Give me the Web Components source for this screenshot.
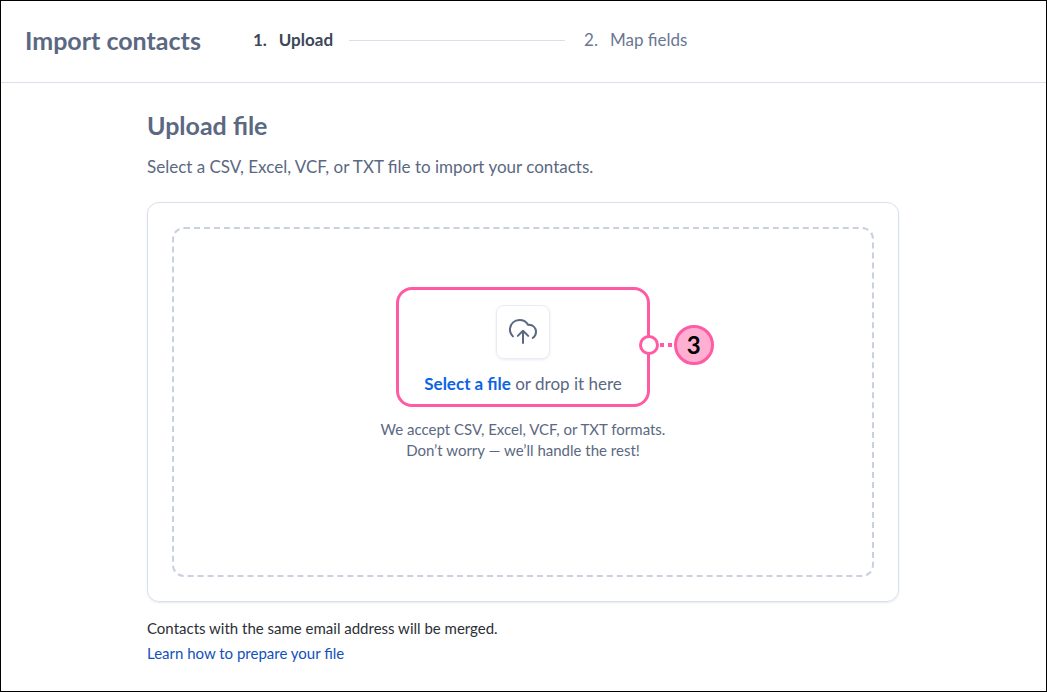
<!DOCTYPE html>
<html lang="en">
<head>
<meta charset="utf-8">
<meta name="viewport" content="width=device-width, initial-scale=1">
<title>Import contacts</title>
<style>
  html, body { margin: 0; }
  body {
    font-family: Lato, "Open Sans", sans-serif;
    background: #fff;
    color: #5b6882;
  }
</style>
</head>
<body>
<import-page>
  <import-header slot="header" heading="Import contacts">
    <import-step number="1." current>Upload</import-step>
    <import-step number="2.">Map fields</import-step>
  </import-header>
  <upload-panel heading="Upload file">
    <span slot="intro">Select a CSV, Excel, VCF, or TXT file to import your contacts.</span>
    <file-drop>
      <callout-box number="3">
        <file-picker></file-picker>
      </callout-box>
      <span slot="hint">We accept CSV, Excel, VCF, or TXT formats.<br>Don’t worry — we’ll handle the rest!</span>
    </file-drop>
    <span slot="note">Contacts with the same email address will be merged.</span>
    <help-link slot="note" to="#prepare">Learn how to prepare your file</help-link>
  </upload-panel>
</import-page>

<script>
const define = (name, html, setup) => {
  const template = document.createElement('template');
  template.innerHTML = html;
  customElements.define(name, class extends HTMLElement {
    constructor() {
      super();
      this.attachShadow({ mode: 'open' }).append(template.content.cloneNode(true));
    }
    connectedCallback() {
      if (setup) setup(this, this.shadowRoot);
    }
  });
};

define('import-page', `
  <style>
    :host { display: block; box-sizing: border-box; min-height: 100vh; border: 1px solid #000; }
    main { padding: 24px 25px 24px 24px; }
  </style>
  <slot name="header"></slot>
  <main><slot></slot></main>
`);

define('import-header', `
  <style>
    :host { display: block; border-bottom: 1px solid #dadfea; }
    header { display: flex; align-items: center; gap: 52px; padding: 23px 24px 26px; }
    h1 { margin: 0; font-size: 25px; line-height: 32px; font-weight: 700; white-space: nowrap; }
    nav { display: flex; align-items: center; }
  </style>
  <header>
    <h1></h1>
    <nav aria-label="Import steps"><slot></slot></nav>
  </header>
`, (host, root) => {
  root.querySelector('h1').textContent = host.getAttribute('heading');
});

define('import-step', `
  <style>
    :host { display: flex; align-items: center; font-size: 17px; line-height: 24px; color: #6b7793; white-space: nowrap; }
    :host([current]) { color: #3c4759; font-weight: 700; }
    :host(:not([current]))::before { content: ""; width: 216px; height: 1px; margin: 0 19px 0 16px; background: #dadfea; }
    .number { margin-right: 12px; }
  </style>
  <span class="number"></span><slot></slot>
`, (host, root) => {
  root.querySelector('.number').textContent = host.getAttribute('number');
});

define('upload-panel', `
  <style>
    :host { display: block; max-width: 752px; margin: 0 auto; }
    h2 { margin: 0 0 12px; font-size: 25px; line-height: 36px; font-weight: 700; }
    .intro { margin: 0 0 23px; font-size: 17px; line-height: 24px; }
    .card { padding: 24px; border: 1px solid #dadfea; border-radius: 12px; box-shadow: 0 1px 2px #dadfeaaa; }
    .note { display: flex; flex-direction: column; align-items: flex-start; gap: 4px; margin-top: 16px; font-size: 15px; line-height: 21px; color: #2b2f36; }
  </style>
  <h2></h2>
  <p class="intro"><slot name="intro"></slot></p>
  <div class="card"><slot></slot></div>
  <div class="note"><slot name="note"></slot></div>
`, (host, root) => {
  root.querySelector('h2').textContent = host.getAttribute('heading');
});

define('file-drop', `
  <style>
    :host { display: flex; flex-direction: column; align-items: center; box-sizing: border-box; min-height: 350px; padding: 58px 24px; border: 2px dashed #c9d0df; border-radius: 12px; }
    p { margin: 12px 0 0; font-size: 15px; line-height: 21px; text-align: center; }
  </style>
  <slot></slot>
  <p><slot name="hint"></slot></p>
`);

define('callout-box', `
  <style>
    :host { position: relative; display: block; padding: 15px 25px 8px; border: 3px solid #ff5ba4; border-radius: 16px; }
    .marker { position: absolute; left: 100%; top: 35px; display: flex; align-items: center; margin-left: -8px; }
    .ring, .badge { box-sizing: border-box; border: 3px solid #ff5ba4; border-radius: 50%; }
    .ring { width: 20px; height: 20px; background: #fff; }
    .dots { width: 12px; height: 4px; margin: 0 2px 0 1px; background: linear-gradient(90deg, #ff5ba4 4px, transparent 4px 8px, #ff5ba4 8px); }
    .badge { width: 40px; height: 40px; background: #ffb0d2; color: #000; font-size: 24px; line-height: 34px; font-weight: 700; text-align: center; }
  </style>
  <slot></slot>
  <div class="marker"><span class="ring"></span><span class="dots"></span><span class="badge"></span></div>
`, (host, root) => {
  root.querySelector('.badge').textContent = host.getAttribute('number');
});

define('file-picker', `
  <style>
    :host { display: flex; flex-direction: column; align-items: center; gap: 13px; font-size: 17px; line-height: 24px; white-space: nowrap; }
    .tile { box-sizing: border-box; display: grid; place-items: center; width: 54px; height: 54px; border: 1px solid #e9ecf2; border-radius: 8px; box-shadow: 0 1px 3px #e9ecf2; }
    svg { display: block; }
    input { position: absolute; width: 1px; height: 1px; opacity: 0; }
    label { color: #0b63e5; font-weight: 700; cursor: pointer; }
    input:focus-visible + label { outline: 2px solid #0b63e5; }
  </style>
  <div class="tile">
    <svg width="32" height="32" viewBox="0 0 32 32" fill="none" stroke="#5b6882" stroke-width="2" stroke-linecap="round" stroke-linejoin="round" aria-hidden="true">
      <path d="M6 20.4C3.7 18.2 2.7 15.4 3 12.5C3.5 7.5 7.5 4 12.4 4C16.500 4 19.500 6 21.200 8.900C25.800 8.400 29 11.700 29 15.700C29 18.500 27.800 20.600 25.700 22"/>
      <path d="M16 27V15M10.800 19.900L16 14.800L21.200 19.900"/>
    </svg>
  </div>
  <div><input type="file" id="file" accept=".csv,.xls,.xlsx,.vcf,.txt"><label for="file">Select a file</label> or drop it here</div>
`);

define('help-link', `
  <style>
    :host { display: block; }
    a { color: #1251ba; text-decoration: none; }
    a:hover { text-decoration: underline; }
  </style>
  <a><slot></slot></a>
`, (host, root) => {
  root.querySelector('a').href = host.getAttribute('to');
});
</script>
</body>
</html>
